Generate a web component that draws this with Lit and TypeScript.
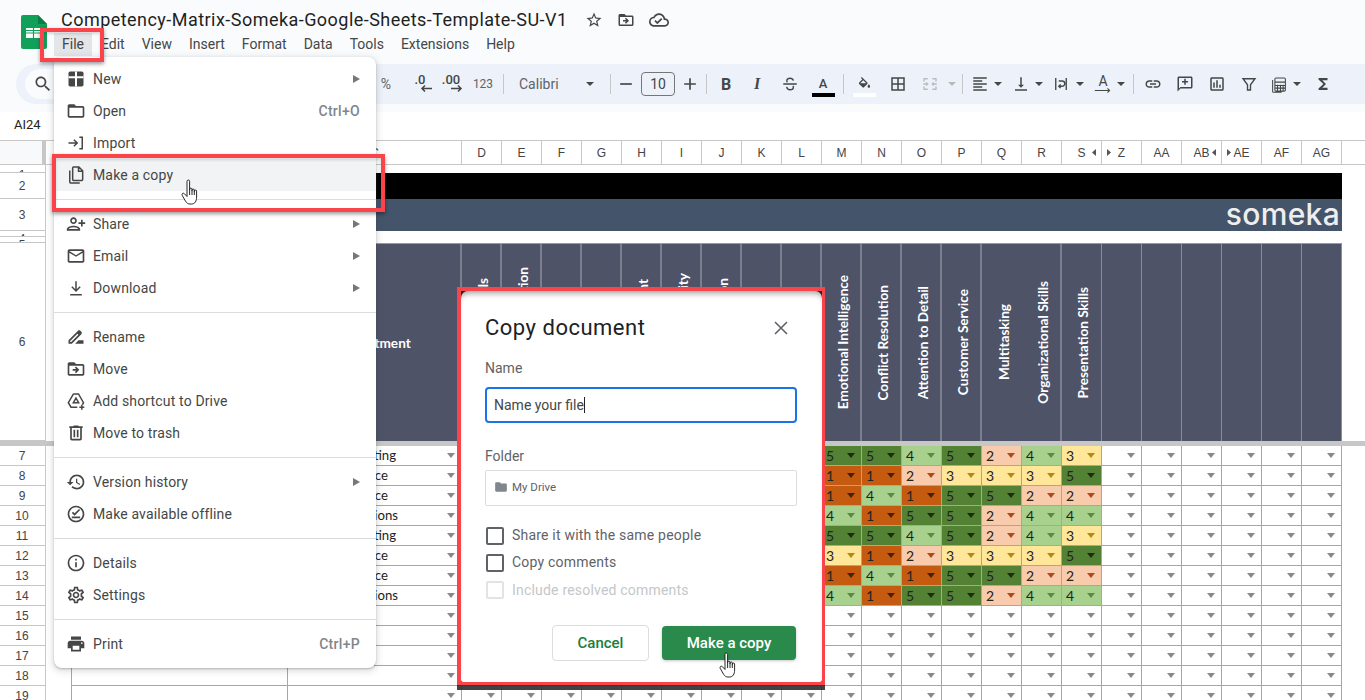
import { LitElement, html, css, nothing } from "lit";
import { customElement } from "lit/decorators.js";

const P = {
  star: "M22 9.24l-7.19-.62L12 2 9.19 8.63 2 9.24l5.46 4.73L5.82 21 12 17.27 18.18 21l-1.63-7.03L22 9.24zM12 15.4l-3.76 2.27 1-4.28-3.32-2.88 4.38-.38L12 6.1l1.71 4.04 4.38.38-3.32 2.88 1 4.28L12 15.4z",
  move: "M20 6h-8l-2-2H4c-1.11 0-1.99.89-1.99 2L2 18c0 1.11.89 2 2 2h16c1.11 0 2-.89 2-2V8c0-1.11-.89-2-2-2zm0 12H4V8h16v10zm-8.01-9l-1.41 1.41L12.16 12H8v2h4.16l-1.59 1.59L11.99 17 16 13.01 11.99 9z",
  cloud: "M19.35 10.04C18.67 6.59 15.64 4 12 4 9.11 4 6.6 5.64 5.35 8.04 2.34 8.36 0 10.91 0 14c0 3.31 2.69 6 6 6h13c2.76 0 5-2.24 5-5 0-2.64-2.05-4.78-4.65-4.96zM19 18H6c-2.21 0-4-1.79-4-4 0-2.05 1.53-3.76 3.56-3.97l1.07-.11.5-.95C8.08 7.14 9.94 6 12 6c2.62 0 4.88 1.86 5.39 4.43l.3 1.5 1.53.11c1.56.1 2.78 1.41 2.78 2.96 0 1.65-1.35 3-3 3zm-9-3.82l-2.09-2.09L6.5 13.5 10 17l6.01-6.01-1.41-1.41z",
  search: "M15.5 14h-.79l-.28-.27C15.41 12.59 16 11.11 16 9.5 16 5.91 13.09 3 9.5 3S3 5.91 3 9.5 5.91 16 9.5 16c1.61 0 3.09-.59 4.23-1.57l.27.28v.79l5 4.99L20.49 19l-4.99-5zm-6 0C7.01 14 5 11.99 5 9.5S7.01 5 9.5 5 14 7.01 14 9.5 11.99 14 9.5 14z",
  folder: "M20 6h-8l-2-2H4c-1.1 0-1.99.9-1.99 2L2 18c0 1.1.9 2 2 2h16c1.1 0 2-.9 2-2V8c0-1.1-.9-2-2-2zm0 12H4V8h16v10z",
  person: "M9 12c2.21 0 4-1.79 4-4s-1.79-4-4-4-4 1.79-4 4 1.79 4 4 4zm0-6c1.1 0 2 .9 2 2s-.9 2-2 2-2-.9-2-2 .9-2 2-2zm0 8c-2.67 0-8 1.34-8 4v2h16v-2c0-2.66-5.33-4-8-4zm-6 4c.22-.72 3.31-2 6-2 2.7 0 5.8 1.29 6 2H3zm17-3v-3h3v-2h-3V7h-2v3h-3v2h3v3h2z",
  mail: "M22 6c0-1.1-.9-2-2-2H4c-1.1 0-2 .9-2 2v12c0 1.1.9 2 2 2h16c1.1 0 2-.9 2-2V6zm-2 0l-8 5-8-5h16zm0 12H4V8l8 5 8-5v10z",
  rename: "M18.41 5.8L17.2 4.59c-.78-.78-2.05-.78-2.83 0l-2.68 2.68L3 15.96V20h4.04l8.74-8.74 2.63-2.63c.79-.78.79-2.05 0-2.83zM6.21 18H5v-1.21l8.66-8.66 1.21 1.21L6.21 18zM11 20l4-4h6v4H11z",
  trash: "M15 4V3H9v1H4v2h1v13c0 1.1.9 2 2 2h10c1.1 0 2-.9 2-2V6h1V4h-5zm2 15H7V6h10v13zM9 8h2v9H9zm4 0h2v9h-2z",
  history: "M13 3c-4.97 0-9 4.03-9 9H1l3.89 3.89.07.14L9 12H6c0-3.87 3.13-7 7-7s7 3.13 7 7-3.13 7-7 7c-1.93 0-3.68-.79-4.94-2.06l-1.42 1.42C8.27 19.99 10.51 21 13 21c4.97 0 9-4.03 9-9s-4.03-9-9-9zm-1 5v5l4.28 2.54.72-1.21-3.5-2.08V8H12z",
  offline: "M12 2C6.5 2 2 6.5 2 12s4.5 10 10 10 10-4.5 10-10S17.5 2 12 2zm0 18c-4.41 0-8-3.59-8-8s3.59-8 8-8 8 3.59 8 8-3.59 8-8 8zm5-3H7v-2h10zM10.3 14L7 10.7l1.4-1.4 1.9 1.9 5.3-5.3L17 7.3 10.3 14z",
  info: "M11 7h2v2h-2zm0 4h2v6h-2zm1-9C6.48 2 2 6.48 2 12s4.48 10 10 10 10-4.48 10-10S17.52 2 12 2zm0 18c-4.41 0-8-3.59-8-8s3.59-8 8-8 8 3.59 8 8-3.59 8-8 8z",
  gear: "M19.43 12.98c.04-.32.07-.64.07-.98 0-.34-.03-.66-.07-.98l2.11-1.65c.19-.15.24-.42.12-.64l-2-3.46c-.09-.16-.26-.25-.44-.25-.06 0-.12.01-.17.03l-2.49 1c-.52-.4-1.08-.73-1.69-.98l-.38-2.65C14.46 2.18 14.25 2 14 2h-4c-.25 0-.46.18-.49.42l-.38 2.65c-.61.25-1.17.59-1.69.98l-2.49-1c-.06-.02-.12-.03-.18-.03-.17 0-.34.09-.43.25l-2 3.46c-.13.22-.07.49.12.64l2.11 1.65c-.04.32-.07.65-.07.98 0 .33.03.66.07.98l-2.11 1.65c-.19.15-.24.42-.12.64l2 3.46c.09.16.26.25.44.25.06 0 .12-.01.17-.03l2.49-1c.52.4 1.08.73 1.69.98l.38 2.65c.03.24.24.42.49.42h4c.25 0 .46-.18.49-.42l.38-2.65c.61-.25 1.17-.59 1.69-.98l2.49 1c.06.02.12.03.18.03.17 0 .34-.09.43-.25l2-3.46c.12-.22.07-.49-.12-.64l-2.11-1.65zm-1.98-1.71c.04.31.05.52.05.73 0 .21-.02.43-.05.73l-.14 1.13.89.7 1.08.84-.7 1.21-1.27-.51-1.04-.42-.9.68c-.43.32-.84.56-1.25.73l-1.06.43-.16 1.13-.2 1.35h-1.4l-.19-1.35-.16-1.13-1.06-.43c-.43-.18-.83-.41-1.23-.71l-.91-.7-1.06.43-1.27.51-.7-1.21 1.08-.84.89-.7-.14-1.13c-.03-.31-.05-.54-.05-.74s.02-.43.05-.73l.14-1.13-.89-.7-1.08-.84.7-1.21 1.27.51 1.04.42.9-.68c.43-.32.84-.56 1.25-.73l1.06-.43.16-1.13.2-1.35h1.39l.19 1.35.16 1.13 1.06.43c.43.18.83.41 1.23.71l.91.7 1.06-.43 1.27-.51.7 1.21-1.07.85-.89.7.14 1.13zM12 8c-2.21 0-4 1.79-4 4s1.79 4 4 4 4-1.79 4-4-1.79-4-4-4zm0 6c-1.1 0-2-.9-2-2s.9-2 2-2 2 .9 2 2-.9 2-2 2z",
  print: "M19 8H5c-1.66 0-3 1.34-3 3v6h4v4h12v-4h4v-6c0-1.66-1.34-3-3-3zm-3 11H8v-5h8v5zm3-7c-.55 0-1-.45-1-1s.45-1 1-1 1 .45 1 1-.45 1-1 1zm-1-9H6v4h12V3z",
  minus: "M5 11h14v2H5z",
  plus: "M19 13h-6v6h-2v-6H5v-2h6V5h2v6h6v2z",
  bucket: "M16.56 8.94L7.62 0 6.21 1.41l2.38 2.38-5.15 5.15c-.59.59-.59 1.54 0 2.12l5.5 5.5c.29.29.68.44 1.06.44s.77-.15 1.06-.44l5.5-5.5c.59-.58.59-1.53 0-2.12zM5.21 10L10 5.21 14.79 10H5.21zM19 11.5s-2 2.17-2 3.5c0 1.1.9 2 2 2s2-.9 2-2c0-1.33-2-3.5-2-3.5z",
  borders: "M3 3v18h18V3H3zm8 16H5v-6h6v6zm0-8H5V5h6v6zm8 8h-6v-6h6v6zm0-8h-6V5h6v6z",
  align: "M15 15H3v2h12v-2zm0-8H3v2h12V7zM3 13h18v-2H3v2zm0 8h18v-2H3v2zM3 3v2h18V3H3z",
  valign: "M16 13h-3V3h-2v10H8l4 4 4-4zM4 19v2h16v-2H4z",
  link: "M3.9 12c0-1.71 1.39-3.1 3.1-3.1h4V7H7c-2.76 0-5 2.24-5 5s2.24 5 5 5h4v-1.9H7c-1.71 0-3.1-1.39-3.1-3.1zM8 13h8v-2H8v2zm9-6h-4v1.9h4c1.71 0 3.1 1.39 3.1 3.1s-1.39 3.1-3.1 3.1h-4V17h4c2.76 0 5-2.24 5-5s-2.24-5-5-5z",
  comment: "M20 2H4c-1.1 0-2 .9-2 2v18l4-4h14c1.1 0 2-.9 2-2V4c0-1.1-.9-2-2-2zm0 14H6l-2 2V4h16v12zM11 5h2v3h3v2h-3v3h-2v-3H8V8h3z",
  chart: "M19 3H5c-1.1 0-2 .9-2 2v14c0 1.1.9 2 2 2h14c1.1 0 2-.9 2-2V5c0-1.1-.9-2-2-2zm0 16H5V5h14v14zM7 10h2v7H7zm4-3h2v10h-2zm4 6h2v4h-2z",
  sigma: "M18 4H6v2l6.5 6L6 18v2h12v-3h-7l5-5-5-5h7V4z",
};

const S = {
  importI: "M3 12h10M9.5 8l4 4-4 4M16 5h3.5v14H16",
  copy: "M9 2.5h6.5L20 7v10.5a1 1 0 0 1-1 1H9a1 1 0 0 1-1-1v-14a1 1 0 0 1 1-1zM15 2.5V7.5h5M4.5 6.5v14a1 1 0 0 0 1 1h11",
  download: "M12 4v11M7 10.5l5 5 5-5M5 20h14",
  shortcut: "M9 3.5h6l6 10.5-1.2 2.3M9 3.5L2.8 14 6 19.5h7.5M12 8.5l3.2 5.5H8.8z M19 16.5v6M16 19.5h6",
  merge: "M4 9V5h5M20 9V5h-5M4 15v4h5M20 15v4h-5M3 12h6M7 10l2 2-2 2M21 12h-6M17 10l-2 2 2 2",
  wrap: "M5 4v16M19 4v16M9 8h4.5a3.5 3.5 0 0 1 0 7H9M11.5 12.5L9 15l2.5 2.5",
  filter: "M4 5h16l-6 8v7h-4v-7z",
  strike: "M16.500 7.500c-.6-2-2.400-3.200-4.500-3.200-2.400 0-4.300 1.300-4.300 3.300 0 .9.3 1.500.9 2.100M3 12h18M7.500 15.800c.4 2.400 2.300 3.900 4.600 3.900 2.500 0 4.400-1.400 4.400-3.500 0-.7-.2-1.200-.5-1.700",
  calc: "M8 4h11a1.5 1.5 0 0 1 1.5 1.5V20a1.5 1.5 0 0 1-1.5 1.5H8A1.5 1.5 0 0 1 6.5 20V5.500A1.5 1.5 0 0 1 8 4zM3.500 6.500V22a1 1 0 0 0 1 1h11M6.500 9.500h14M10 13v8M14 13v8M17.500 13v8M7 14h13M7 17.500h13",
};

const svgP = (d: string, cls = "s20") => html`<svg class="ic ${cls}" viewBox="0 0 24 24"><path d=${d}></path></svg>`;
const svgS = (d: string, cls = "s20") => html`<svg class="ic st ${cls}" viewBox="0 0 24 24"><path d=${d}></path></svg>`;
const caretI = (cls = "") => html`<svg class="caret ${cls}" viewBox="0 0 8 4"><path d="M0 0h8L4 4z"></path></svg>`;

const hand = (cls: string) => html`<svg class="hand ${cls}" viewBox="0 0 20 26">
  <path d="M6 2.300C6 .6 8.600 .6 8.600 2.300V11.500V10.300C8.600 8.800 11 8.800 11 10.300V12V11C11 9.700 13.300 9.700 13.300 11V12.800V12C13.300 10.800 15.600 10.800 15.600 12V18C15.600 22 14 25 10.500 25H9C6.800 25 5.800 24 4.600 22.300L1.200 16.300C.4 14.800 2.200 13.400 3.400 14.700L6 17.500Z"></path>
  <path d="M8.600 11.500V16M11 12V16M13.300 12.800V16" fill="none"></path>
</svg>`;

const MENU: any[] = [
  { l: "New", i: "new", a: 1 },
  { l: "Open", i: svgP(P.folder), k: "Ctrl+O" },
  { l: "Import", i: svgS(S.importI) },
  { l: "Make a copy", i: svgS(S.copy), on: 1 },
  0,
  { l: "Share", i: svgP(P.person), a: 1 },
  { l: "Email", i: svgP(P.mail), a: 1 },
  { l: "Download", i: svgS(S.download), a: 1 },
  0,
  { l: "Rename", i: svgP(P.rename) },
  { l: "Move", i: svgP(P.move) },
  { l: "Add shortcut to Drive", i: svgS(S.shortcut) },
  { l: "Move to trash", i: svgP(P.trash) },
  0,
  { l: "Version history", i: svgP(P.history), a: 1 },
  { l: "Make available offline", i: svgP(P.offline) },
  0,
  { l: "Details", i: svgP(P.info) },
  { l: "Settings", i: svgP(P.gear) },
  0,
  { l: "Print", i: svgP(P.print), k: "Ctrl+P" },
];

const MENUBAR = ["File", "Edit", "View", "Insert", "Format", "Data", "Tools", "Extensions", "Help"];

const T = (c: number, w: number, content: any, cls = "") => ({ c, w, content, cls });
const sep = (c: number) => T(c, 1, nothing, "tsep");
const cr = (c: number, cls = "") => T(c, 8, caretI(cls));
const arrowL = html`<svg class="deca" viewBox="0 0 12 7"><path d="M12 3.500H2M5 .5L2 3.500l3 3"></path></svg>`;
const arrowR = html`<svg class="deca" viewBox="0 0 12 7"><path d="M0 3.500h10M7 .5l3 3-3 3"></path></svg>`;

const TOOLS = [
  T(386, 16, html`<span class="tpct">%</span>`),
  T(420, 24, html`<span class="dec"><span>.0</span>${arrowL}</span>`),
  T(451, 26, html`<span class="dec"><span>.00</span>${arrowR}</span>`),
  T(483, 24, html`<span class="t123">123</span>`),
  sep(503),
  T(549, 60, html`<span class="tfont">Calibri</span>`),
  cr(590),
  sep(610),
  T(626, 18, svgP(P.minus, "s20")),
  T(658, 34, html`<span class="tsize">10</span>`),
  T(690, 18, svgP(P.plus, "s20")),
  sep(706),
  T(726, 18, html`<span class="tb">B</span>`),
  T(757, 18, html`<span class="ti">I</span>`),
  T(790, 20, svgS(S.strike, "s18")),
  T(823, 24, html`<span class="colr"><span class="colr-a">A</span><i class="bar black"></i></span>`),
  sep(843),
  T(864, 24, html`<span class="colr">${svgP(P.bucket, "s15")}<i class="bar white"></i></span>`),
  T(898, 20, svgP(P.borders, "s18")),
  T(930, 20, svgS(S.merge, "s18 dim")),
  cr(952, "dimc"),
  sep(962),
  T(980, 18, svgP(P.align, "s18")),
  cr(998),
  T(1021, 18, svgP(P.valign, "s18")),
  cr(1039),
  T(1061, 18, svgS(S.wrap, "s18")),
  cr(1080),
  T(1103, 18, html`<span class="rot"><span class="rot-a">A</span><svg class="ic st rot-u" viewBox="0 0 22 6"><path d="M1 3h18M16.500 .5L19 3l-2.500 2.500"></path></svg></span>`),
  cr(1121),
  sep(1133),
  T(1153, 20, svgP(P.link, "s18")),
  T(1185, 20, svgP(P.comment, "s18")),
  T(1217, 20, svgP(P.chart, "s18")),
  T(1249, 20, svgS(S.filter, "s18")),
  T(1279, 20, svgS(S.calc, "s18 thin")),
  cr(1297),
  T(1323, 20, svgP(P.sigma, "s18")),
];

const COLS: { k: string; l?: string; t?: string; b?: number }[] = [
  { k: "D", l: "Communication Skills", b: 1 },
  { k: "E", l: "Interpersonal Interaction", b: 1 },
  { k: "F", b: 1 },
  { k: "G", b: 1 },
  { k: "H", l: "Project Management", b: 1 },
  { k: "I", l: "Analysis and Creativity", b: 1 },
  { k: "J", l: "Effective Negotiation", b: 1 },
  { k: "K", b: 1 },
  { k: "L", b: 1 },
  { k: "M", l: "Emotional Intelligence", b: 1 },
  { k: "N", l: "Conflict Resolution", b: 1 },
  { k: "O", l: "Attention to Detail", b: 1 },
  { k: "P", l: "Customer Service", b: 1 },
  { k: "Q", l: "Multitasking", b: 2 },
  { k: "R", l: "Organizational Skills", b: 1 },
  { k: "S", l: "Presentation Skills", t: "l" },
  { k: "Z", t: "r" },
  { k: "AA" },
  { k: "AB", t: "l" },
  { k: "AE", t: "r" },
  { k: "AF" },
  { k: "AG" },
];

const SCORES = [
  [5, 5, 4, 5, 2, 4, 3],
  [1, 1, 2, 3, 3, 3, 5],
  [1, 4, 1, 5, 5, 2, 2],
  [4, 1, 5, 5, 2, 4, 4],
  [5, 5, 4, 5, 2, 4, 3],
  [3, 1, 2, 3, 3, 3, 5],
  [1, 4, 1, 5, 5, 2, 2],
  [4, 1, 5, 5, 2, 4, 4],
];
const DEPT: Record<string, number> = { Marketing: 396, Finance: 388, Operations: 398 };
const DEPTS = ["Marketing", "Finance", "Finance", "Operations", "Marketing", "Finance", "Finance", "Operations"];

@customElement("app-root")
export class AppRoot extends LitElement {
  static styles = css`
    :host { display: block; width: 1365px; height: 700px; position: relative; overflow: hidden; background: #fff; font-family: Roboto, "Liberation Sans", sans-serif; color: #444746; }
    * { box-sizing: border-box; }
    .ic { display: block; fill: #444746; flex: none; }
    .ic.st { fill: none; stroke: #444746; stroke-width: 1.8; }
    .ic.thin { stroke-width: 1.4; }
    .ic.dim { stroke: #bcbcbc; }
    .s20 { width: 20px; height: 20px; }
    .s18 { width: 18px; height: 18px; }
    .s15 { width: 15px; height: 15px; }
    .caret { display: block; width: 8px; height: 4px; fill: #444746; }
    .caret.dimc { fill: #b8b8b8; }

    .top { height: 112px; background: #f9fbfd; }
    .appbar { height: 64px; display: flex; padding-left: 21px; }
    .logo { width: 26px; height: 34px; margin-top: 15px; flex: none; }
    .titlecol { margin-left: 7px; padding-top: 6px; }
    .titlerow { display: flex; align-items: center; height: 27px; padding-left: 7px; }
    .title { font: 400 18px/27px Roboto, sans-serif; color: #1f1f1f; width: 506px; white-space: nowrap; letter-spacing: .46px; }
    .tico { display: flex; align-items: center; gap: 14px; margin-left: 18px; }
    .tico .ic { width: 18px; height: 18px; }
    .tico .ic.cl { width: 20px; height: 20px; }
    .menubar { display: flex; height: 23px; align-items: center; }
    .mb { font-size: 14px; line-height: 23px; padding: 0 8px; color: #444746; white-space: nowrap; }
    .mb + .mb { margin-left: 1px; }
    .mb.on { background: #e3e5e8; }
    .toolbar { height: 40px; margin-left: 16px; background: #edf2fa; border-radius: 24px 0 0 24px; display: flex; align-items: center; padding-left: 9px; }
    .pill { width: 60px; height: 30px; background: #f9fbfd; border-radius: 15px; display: flex; align-items: center; padding-left: 8px; flex: none; }
    .tool { display: flex; align-items: center; justify-content: center; flex: none; height: 32px; white-space: nowrap; }
    .tsep { height: 20px; background: #c7c7c7; }
    .tpct { font-size: 14px; color: #5f6368; }
    .dec { position: relative; font-size: 13px; font-weight: 500; color: #444746; display: flex; flex-direction: column; align-items: center; line-height: 14px; }
    .dec > span { margin-top: -3px; }
    .deca { width: 12px; height: 7px; fill: none; stroke: #444746; stroke-width: 1.5; margin-left: 12px; margin-top: -2px; }
    .t123 { font-size: 12px; color: #5f6368; }
    .tfont { width: 60px; font-size: 14px; color: #5f6368; }
    .tsize { width: 34px; height: 24px; border: 1px solid #747775; border-radius: 4px; font-size: 14px; display: flex; align-items: center; justify-content: center; }
    .tb { font-size: 16px; font-weight: 700; }
    .ti { font: italic 700 16px "Liberation Serif", serif; }
    .colr { display: flex; flex-direction: column; align-items: center; height: 26px; justify-content: flex-end; }
    .colr-a { font-size: 13px; font-weight: 500; line-height: 16px; }
    .bar { display: block; width: 23px; height: 4px; margin-top: 1px; }
    .bar.black { background: #000; }
    .bar.white { background: #fff; }
    .rot { display: flex; flex-direction: column; align-items: center; }
    .rot-a { font-size: 14px; line-height: 13px; }
    .rot-u { width: 18px; height: 5px; stroke-width: 1.3 !important; }

    .formula { height: 28px; display: flex; align-items: center; padding: 0 0 3px 14px; font-size: 13px; color: #222; }

    .colhead { display: flex; height: 25px; border-top: 1px solid #c7c7c7; border-bottom: 1px solid #c7c7c7; }
    .corner { width: 46px; flex: none; background: #f8f9fa; border-right: 4px solid #c7c7c7; }
    .ch { flex: none; display: flex; align-items: center; justify-content: center; border-right: 1px solid #c7c7c7; font: 12px "Liberation Sans", sans-serif; color: #444; position: relative; }
    .tri { position: absolute; top: 8px; width: 4px; height: 7px; fill: #555; }
    .tri.l { right: 5px; }
    .tri.r { left: 5px; }

    .row { display: flex; flex: none; }
    .rh { width: 46px; flex: none; border-right: 1px solid #c7c7c7; border-bottom: 1px solid #c7c7c7; font: 12px/12px "Liberation Sans", sans-serif; color: #444; text-align: center; overflow: hidden; padding-right: 1px; display: flex; align-items: center; justify-content: center; }
    .rh.mini { align-items: flex-start; }
    .colA { width: 26px; flex: none; }
    .band { width: 1270px; flex: none; }
    .band.black { background: #000; }
    .band.blue { background: #44546a; display: flex; justify-content: flex-end; align-items: center; }
    .someka { font: 500 30px/32px Inter, sans-serif; color: #eeeeee; letter-spacing: .3px; padding-right: 2px; margin-top: -2px; }
    .head { display: flex; width: 1270px; flex: none; background: #4e5368; border-top: 1px solid #9a9a9a; }
    .hc { flex: none; display: flex; align-items: center; justify-content: center; height: 100%; color: #fff; font: 700 13.600px Lato, sans-serif; }
    .hc.b1 { border-right: 2px solid #7b7e8c; }
    .hc.b0 { border-right: 1px solid #8b8e9a; }
    .hc .vt { writing-mode: vertical-rl; transform: rotate(180deg); white-space: nowrap; margin-left: 3px; }
    .frozen { height: 5px; background: #c7c7c7; }
    .ca { width: 26px; flex: none; border-right: 1px solid #a6a6a6; }
    .cb, .cd { flex: none; border-right: 1px solid #a6a6a6; border-bottom: 1px solid #a6a6a6; position: relative; font: 14px/19px Lato, sans-serif; color: #222; white-space: nowrap; }
    .cb { width: 216px; }
    .cc-text { font-size: 13.200px; text-align: right; width: 174px; }
    .cd { width: 40px; padding-left: 4px; }
    .dd { position: absolute; right: 6px; top: 7px; width: 8px; height: 5px; }
    .dd path { fill: var(--dd, #888); }

    .v5 { background: #548235; --dd: #1b2c10; }
    .v4 { background: #a9d18e; --dd: #5b8a44; }
    .v3 { background: #ffe699; --dd: #b08a14; }
    .v2 { background: #f8cbad; --dd: #b0481a; }
    .v1 { background: #c55a11; --dd: #4a2005; }

    .menu { position: absolute; left: 54px; top: 57px; width: 322px; height: 611px; background: #fff; border-radius: 8px; box-shadow: 0 2px 6px 2px rgba(60,64,67,.15), 0 1px 2px rgba(60,64,67,.3); padding: 6px 0 8px; }
    .mi { height: 32px; display: flex; align-items: center; padding: 0 16px 0 12px; font-size: 14px; color: #444746; }
    .mi.on { background: #f1f3f4; }
    .mi .lab { margin-left: 7px; flex: 1; letter-spacing: .15px; }
    .mi .k { color: #80868b; font-weight: 500; letter-spacing: .3px; }
    .mi .ar { width: 7px; height: 8px; fill: #777; }
    .msep { height: 1px; background: #dadce0; margin: 8px 0; }

    .red { position: absolute; border: 4px solid #f9444c; box-shadow: 0 2px 4px rgba(0,0,0,.4), inset 0 2px 3px rgba(0,0,0,.15); }
    .red.file { left: 40px; top: 28px; width: 64px; height: 34px; }
    .red.copy { left: 52px; top: 154px; width: 333px; height: 58px; }

    .dlgwrap { position: absolute; left: 457px; top: 287px; width: 368px; height: 398px; border: solid #f9444c; border-width: 4px 3px 3px 4px; background: #222; box-shadow: 0 5px 0 rgba(40,40,40,.88); }
    .dlg { height: 100%; background: #fff; border-radius: 7px 7px 2px 2px; padding: 23px 24px 0 24px; box-shadow: inset 0 6px 6px -4px rgba(0,0,0,.4); display: flex; flex-direction: column; }
    .dhead { display: flex; align-items: center; justify-content: space-between; height: 28px; }
    .dtitle { font: 400 22px/28px Roboto, sans-serif; color: #202124; letter-spacing: .5px; }
    .x { width: 20px; height: 20px; stroke: #5f6368; stroke-width: 1.6; fill: none; margin-right: 7px; }
    .flab { font-size: 14px; line-height: 20px; color: #5f6368; }
    .input { margin-top: 9px; height: 36px; border: 2px solid #1a73e8; border-radius: 4px; font-size: 14px; display: flex; align-items: center; padding: 0 0 1px 7px; color: #444746; width: 312px; }
    .cur { display: inline-block; width: 1px; height: 16px; background: #222; }
    .fbox { margin-top: 4px; height: 36px; width: 312px; border: 1px solid #dadce0; border-radius: 2px; display: flex; align-items: center; padding: 0 0 2px 8px; gap: 4px; font-size: 11.500px; color: #5f6368; }
    .fbox .ic { fill: #80868b; width: 14px; height: 14px; }
    .chk { display: flex; align-items: center; height: 18px; margin-top: 9px; font-size: 14px; color: #5f6368; padding-left: 1px; letter-spacing: .2px; }
    .chk span { margin-top: -2px; }
    .chk.off span { margin-top: 0; }
    .chk i { width: 18px; height: 18px; border: 2px solid #5f6368; border-radius: 2px; margin-right: 8px; flex: none; }
    .chk.off { color: #c4c7ca; }
    .chk.off i { border-color: #e3e3e3; }
    .acts { display: flex; justify-content: flex-end; align-items: center; gap: 13px; margin-top: 26px; padding-right: 1px; width: 312px; }
    .btn { display: flex; align-items: center; justify-content: center; border-radius: 4px; font-size: 15px; font-weight: 500; }
    .btn.c { width: 97px; height: 36px; border: 1px solid #dadce0; color: #188038; background: #fff; }
    .btn.p { width: 134px; height: 34px; background: #2a8a4c; color: #fff; box-shadow: 0 1px 3px rgba(60,64,67,.3); }

    .hand { position: absolute; width: 20px; height: 26px; fill: #fff; stroke: #111; stroke-width: .9; }
    .hand.h1 { left: 181px; top: 179px; }
    .hand.h2 { left: 719px; top: 652px; }
  `;

  private renderTools() {
    let x = 85;
    return TOOLS.map((t) => {
      const ml = t.c - t.w / 2 - x;
      x = t.c + t.w / 2;
      return html`<div class="tool ${t.cls}" style="width:${t.w}px;margin-left:${ml}px">${t.content}</div>`;
    });
  }

  private rh(n: number, h: number) {
    const mini = h < 12;
    return html`<div class="rh ${mini ? "mini" : ""}" style=${mini ? `padding-top:${h - 4}px` : ""}>${n}</div>`;
  }

  private dd() {
    return html`<svg class="dd" viewBox="0 0 8 5"><path d="M0 0h8L4 5z"></path></svg>`;
  }

  private dataRow(n: number, idx: number) {
    const vals = SCORES[idx];
    const dept = DEPTS[idx];
    return html`<div class="row" style="height:20px">
      ${this.rh(n, 20)}
      <div class="ca"></div>
      <div class="cb"></div>
      <div class="cb cc-text" style=${dept ? `padding-right:${461 - DEPT[dept]}px` : ""}>${dept || ""}${this.dd()}</div>
      ${COLS.map((_, c) => {
        const v = vals && c >= 9 && c < 16 ? vals[c - 9] : 0;
        return html`<div class="cd ${v ? "v" + v : ""}">${v || ""}${this.dd()}</div>`;
      })}
    </div>`;
  }

  render() {
    const rowsN = [7, 8, 9, 10, 11, 12, 13, 14, 15, 16, 17, 18, 19];
    return html`
      <div class="top">
        <div class="appbar">
          <svg class="logo" viewBox="0 0 26 34">
            <path d="M2 0h15l9 9v23a2 2 0 0 1-2 2H2a2 2 0 0 1-2-2V2a2 2 0 0 1 2-2z" fill="#11a05a"></path>
            <path d="M17 0l9 9h-9z" fill="#0b7d45"></path>
            <rect x="5" y="13" width="15" height="10" fill="#fff"></rect>
            <path d="M5 18h15M12.500 13v10M5 15.500h15" stroke="#11a05a" stroke-width="1.200" fill="none"></path>
          </svg>
          <div class="titlecol">
            <div class="titlerow">
              <div class="title">Competency-Matrix-Someka-Google-Sheets-Template-SU-V1</div>
              <div class="tico">
                ${svgP(P.star, "")}${svgP(P.move, "")}${svgP(P.cloud, "cl")}
              </div>
            </div>
            <div class="menubar">
              ${MENUBAR.map((m, i) => html`<div class="mb ${i === 0 ? "on" : ""}">${m}</div>`)}
            </div>
          </div>
        </div>
        <div class="toolbar">
          <div class="pill">${svgP(P.search, "s20")}</div>
          ${this.renderTools()}
        </div>
      </div>
      <div class="formula">AI24</div>

      <div class="colhead">
        <div class="corner"></div>
        <div class="ch" style="width:26px"></div>
        <div class="ch" style="width:216px"></div>
        <div class="ch" style="width:174px">C</div>
        ${COLS.map(
          (c) => html`<div class="ch" style="width:40px">${c.k}${c.t
            ? html`<svg class="tri ${c.t}" viewBox="0 0 4 7"><path d=${c.t === "l" ? "M4 0v7L0 3.500z" : "M0 0v7l4-3.500z"}></path></svg>`
            : nothing}</div>`
        )}
      </div>

      <div class="row" style="height:8px">${this.rh(1, 8)}</div>
      <div class="row" style="height:26px">${this.rh(2, 26)}<div class="colA"></div><div class="band black"></div></div>
      <div class="row" style="height:32px">${this.rh(3, 32)}<div class="colA"></div><div class="band blue"><span class="someka">someka</span></div></div>
      <div class="row" style="height:6px">${this.rh(4, 6)}</div>
      <div class="row" style="height:6px">${this.rh(5, 6)}</div>
      <div class="row" style="height:198px">
        ${this.rh(6, 198)}
        <div class="colA"></div>
        <div class="head">
          <div class="hc b1" style="width:216px"></div>
          <div class="hc b1" style="width:174px">Department</div>
          ${COLS.map(
            (c) => html`<div class="hc ${c.b === 1 ? "b1" : c.b === 2 ? "" : "b0"}" style="width:40px">${c.l ? html`<span class="vt">${c.l}</span>` : nothing}</div>`
          )}
        </div>
      </div>
      <div class="frozen"></div>
      ${rowsN.map((n, i) => this.dataRow(n, i))}

      <div class="menu">
        ${MENU.map((m) =>
          m
            ? html`<div class="mi ${m.on ? "on" : ""}">
                ${m.i === "new"
                  ? html`<svg class="ic s20" viewBox="0 0 24 24"><rect x="3" y="3" width="18" height="18" rx="2" fill="#444746"></rect><path d="M3 10h18M12 3v18" stroke="#fff" stroke-width="2.400" fill="none"></path></svg>`
                  : m.i}
                <span class="lab">${m.l}</span>
                ${m.k ? html`<span class="k">${m.k}</span>` : nothing}
                ${m.a ? html`<svg class="ar" viewBox="0 0 7 8"><path d="M0 0l7 4-7 4z"></path></svg>` : nothing}
              </div>`
            : html`<div class="msep"></div>`
        )}
      </div>

      <div class="red file"></div>
      <div class="red copy"></div>
      ${hand("h1")}

      <div class="dlgwrap">
        <div class="dlg">
          <div class="dhead">
            <div class="dtitle">Copy document</div>
            <svg class="x" viewBox="0 0 20 20"><path d="M4 4l12 12M16 4L4 16"></path></svg>
          </div>
          <div class="flab" style="margin-top:16px">Name</div>
          <div class="input">Name your file<span class="cur"></span></div>
          <div class="flab" style="margin-top:23px">Folder</div>
          <div class="fbox">${svgP("M10 4H4c-1.100 0-1.990.900-1.990 2L2 18c0 1.100.900 2 2 2h16c1.100 0 2-.900 2-2V8c0-1.100-.900-2-2-2h-8l-2-2z", "")}<span>My Drive</span></div>
          <div class="chk" style="margin-top:21px"><i></i><span>Share it with the same people</span></div>
          <div class="chk"><i></i><span>Copy comments</span></div>
          <div class="chk off"><i></i><span>Include resolved comments</span></div>
          <div class="acts">
            <div class="btn c">Cancel</div>
            <div class="btn p">Make a copy</div>
          </div>
        </div>
      </div>
      ${hand("h2")}
    `;
  }
}
